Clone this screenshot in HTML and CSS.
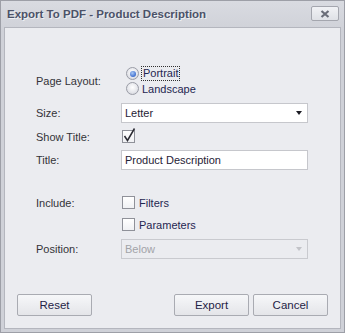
FILE: index.html
```html
<!DOCTYPE html>
<html lang='en'>
<head>
    <meta charset='UTF-8'>
    <meta name='viewport' content='width=device-width, initial-scale=1.0'>
    <title>Export To PDF</title>
    <link rel="stylesheet" href="styles.css">
</head>
<body>
    <div class="window">
        <div class="titlebar">
            <span class="title">Export To PDF - Product Description</span>
            <button class="close">
                <svg width="10" height="8" viewBox="0 0 10 8">
                    <path d="M1.5 1 L8.5 7 M8.5 1 L1.5 7" stroke="#6a6d78" stroke-width="2.2" fill="none"/>
                </svg>
            </button>
        </div>
        <div class="panel">
            <div class="form">
                <div class="row row_layout">
                    <span class="label">Page Layout:</span>
                    <div class="radios">
                        <div class="radio checked"><span class="dot"></span><span class="focus">Portrait</span></div>
                        <div class="radio"><span class="dot"></span><span class="text">Landscape</span></div>
                    </div>
                </div>
                <div class="row row_field">
                    <span class="label">Size:</span>
                    <div class="combo">
                        <span class="value">Letter</span>
                        <span class="arrow"></span>
                    </div>
                </div>
                <div class="row row_check">
                    <span class="label">Show Title:</span>
                    <span class="check checked">
                        <svg width="14" height="16" viewBox="0 0 14 16">
                            <path d="M2.5 9 L5.5 13.5 L12.5 1.5" stroke="#2c2c34" stroke-width="1.5" fill="none"/>
                        </svg>
                    </span>
                </div>
                <div class="row row_field">
                    <span class="label">Title:</span>
                    <div class="textbox">Product Description</div>
                </div>
                <div class="row row_check row_include">
                    <span class="label">Include:</span>
                    <span class="check"></span>
                    <span class="check_text">Filters</span>
                </div>
                <div class="row row_check row_sub">
                    <span class="label"></span>
                    <span class="check"></span>
                    <span class="check_text">Parameters</span>
                </div>
                <div class="row row_field row_sub">
                    <span class="label">Position:</span>
                    <div class="combo disabled">
                        <span class="value">Below</span>
                        <span class="arrow"></span>
                    </div>
                </div>
            </div>
            <div class="buttons">
                <button class="btn">Reset</button>
                <span class="spacer"></span>
                <button class="btn">Export</button>
                <button class="btn">Cancel</button>
            </div>
        </div>
    </div>
</body>
</html>
```

FILE: styles.css
```css
body
{
    margin: 0;
    font-family: 'Liberation Sans', Arial, sans-serif;
    font-size: 11px;
    background: #ffffff;
}
.window
{
    box-sizing: border-box;
    width: 345px;
    height: 333px;
    border: 1px solid #9d9fa7;
    background: linear-gradient(#d9dbe1, #cfd1d8 30px, #cfd1d8);
    display: flex;
    flex-direction: column;
}
.titlebar
{
    height: 26px;
    display: flex;
    align-items: center;
    padding-left: 6px;
}
.title
{
    flex: 1;
    font-weight: bold;
    font-size: 11.5px;
    color: #4c5268;
    text-shadow: 1px 1px 0 #eef0f4;
}
.close
{
    box-sizing: border-box;
    align-self: flex-start;
    margin: 5px 5px 0 0;
    width: 28px;
    height: 15px;
    padding: 0;
    border: 1px solid #a4a6ae;
    border-radius: 2px;
    background: linear-gradient(#f1f2f5, #dfe1e6);
    display: flex;
    align-items: center;
    justify-content: center;
}
.panel
{
    flex: 1;
    margin: 0 3px 3px 3px;
    border: 1px solid #b4b6be;
    background: #ebecf0;
    display: flex;
    flex-direction: column;
}
.form
{
    padding: 38px 0 0 31px;
}
.row
{
    display: flex;
    align-items: center;
}
.label
{
    width: 85px;
    color: #333338;
}
.row_layout
{
    height: 30px;
}
.row_field
{
    height: 20px;
    margin-top: 7px;
}
.row_check
{
    height: 15px;
    margin-top: 6px;
}
.row_field + .row_check
{
    margin-top: 6px;
}
.row_check + .row_field
{
    margin-top: 6px;
}
.row_include
{
    margin-top: 25px !important;
}
.row_sub
{
    margin-top: 7px !important;
}
.radios
{
    display: flex;
    flex-direction: column;
}
.radio
{
    height: 15px;
    display: flex;
    align-items: center;
    margin-left: 5px;
    color: #1f2650;
}
.dot
{
    box-sizing: border-box;
    width: 13px;
    height: 13px;
    border-radius: 50%;
    border: 1px solid #9a9ca6;
    background: radial-gradient(circle at 50% 40%, #ffffff, #e4e5ea 60%, #c9cbd2);
    margin-right: 4px;
    position: relative;
}
.checked .dot::after
{
    content: '';
    position: absolute;
    left: 2.5px;
    top: 2.5px;
    width: 6px;
    height: 6px;
    border-radius: 50%;
    background: radial-gradient(circle at 40% 35%, #a9c8f4, #3f6fd0 70%, #2d55ad);
}
.focus
{
    border: 1px dotted #303030;
    padding: 0 1px;
    margin-left: -2px;
    line-height: 13px;
}
.text
{
    margin-left: -1px;
}
.combo, .textbox
{
    box-sizing: border-box;
    width: 187px;
    height: 20px;
    border: 1px solid #c6c7cc;
    background: #ffffff;
    color: #1f2236;
    display: flex;
    align-items: center;
    padding-left: 3px;
}
.combo .value
{
    flex: 1;
}
.arrow
{
    width: 0;
    height: 0;
    border-left: 3.5px solid transparent;
    border-right: 3.5px solid transparent;
    border-top: 4px solid #1c1c24;
    margin-right: 5px;
}
.combo.disabled
{
    background: #ebecf0;
    border-color: #c9cacf;
    color: #a2a3a8;
}
.combo.disabled .arrow
{
    border-top-color: #c2c3c8;
}
.check
{
    box-sizing: border-box;
    width: 13px;
    height: 13px;
    margin-left: 1px;
    border: 1px solid #8f9199;
    background: linear-gradient(#ffffff, #f0f1f4);
    position: relative;
}
.check svg
{
    position: absolute;
    left: -1px;
    top: -4px;
}
.check_text
{
    margin-left: 4px;
    color: #1f2650;
}
.buttons
{
    margin-top: auto;
    display: flex;
    gap: 4px;
    padding: 0 12px 12px 12px;
}
.spacer
{
    flex: 1;
}
.btn
{
    box-sizing: border-box;
    width: 75px;
    height: 22px;
    border: 1px solid #a9abb2;
    border-radius: 2px;
    background: linear-gradient(#f6f7f9, #e4e5e9);
    font-family: 'Liberation Sans', Arial, sans-serif;
    font-size: 11.5px;
    color: #1f2346;
    padding: 0;
}
```
